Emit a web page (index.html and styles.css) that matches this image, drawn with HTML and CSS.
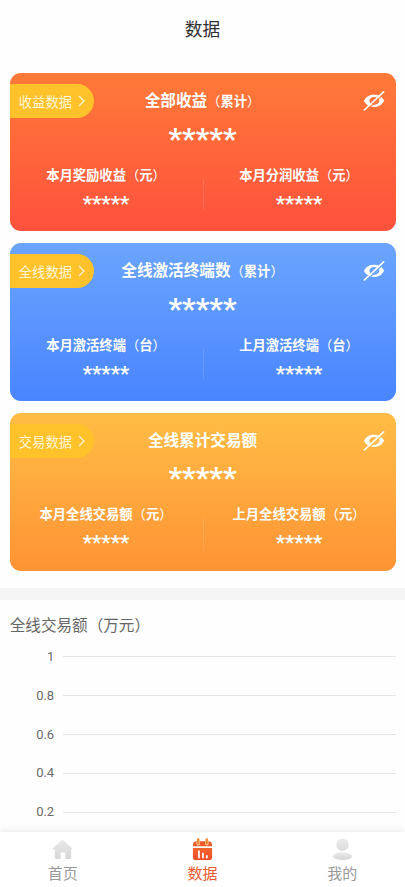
FILE: index.html
```html
<!DOCTYPE html>
<html lang="zh-CN">
<head>
<meta charset="utf-8">
<title>数据</title>
<link rel="stylesheet" href="styles.css">
</head>
<body>
<svg class="defs" width="0" height="0" aria-hidden="true">
  <symbol id="eye-off" viewBox="0 0 22 20">
    <path fill="currentColor" fill-rule="evenodd" d="M1 9.800C3 5.600 6.500 3.700 11 3.700c4.600 0 8.200 2 10.200 5.700-2 4.400-5.600 6.500-10.200 6.500-4.500 0-8.200-2-10-6.100zM6.400 10c.2 2.300 2 3.700 4.800 3.700 2.900 0 5-1.500 5.200-3.900-.2-2.400-2.100-3.800-5-3.800-2.900 0-4.800 1.500-5 4z"/>
    <path d="M13.500 7.300q1.300.8 1 2.600-.5 1.700-2.500 2.200-1.600.3-3.200-.3z" fill="currentColor" opacity=".35"/>
    <path class="slash-gap" d="M2.600 20 22 2" fill="none" stroke-width="1.200"/>
    <path d="M1.300 19 20.600.9" fill="none" stroke="currentColor" stroke-width="1.600" stroke-linecap="round"/>
  </symbol>
</svg>
<header class="header">数据</header>
<main class="content">
  <section class="cards">
    <article class="card card-red">
      <a class="tag">收益数据<svg viewBox="0 0 7 12"><path d="M1 1l5 5-5 5"/></svg></a>
      <svg class="eye"><use href="#eye-off"/></svg>
      <h2>全部收益<small><em>（</em>累计<em>）</em></small></h2>
      <p class="total">*****</p>
      <div class="columns">
        <div class="column"><span>本月奖励收益<em>（</em>元<em>）</em></span><b>*****</b></div>
        <div class="column"><span>本月分润收益<em>（</em>元<em>）</em></span><b>*****</b></div>
      </div>
    </article>
    <article class="card card-blue">
      <a class="tag">全线数据<svg viewBox="0 0 7 12"><path d="M1 1l5 5-5 5"/></svg></a>
      <svg class="eye"><use href="#eye-off"/></svg>
      <h2>全线激活终端数<small><em>（</em>累计<em>）</em></small></h2>
      <p class="total">*****</p>
      <div class="columns">
        <div class="column"><span>本月激活终端<em>（</em>台<em>）</em></span><b>*****</b></div>
        <div class="column"><span>上月激活终端<em>（</em>台<em>）</em></span><b>*****</b></div>
      </div>
    </article>
    <article class="card card-orange">
      <a class="tag">交易数据<svg viewBox="0 0 7 12"><path d="M1 1l5 5-5 5"/></svg></a>
      <svg class="eye"><use href="#eye-off"/></svg>
      <h2>全线累计交易额</h2>
      <p class="total">*****</p>
      <div class="columns">
        <div class="column"><span>本月全线交易额<em>（</em>元<em>）</em></span><b>*****</b></div>
        <div class="column"><span>上月全线交易额<em>（</em>元<em>）</em></span><b>*****</b></div>
      </div>
    </article>
  </section>
  <section class="chart">
    <h3>全线交易额（万元）</h3>
    <div class="tick"><span>1</span><i></i></div>
    <div class="tick"><span>0.8</span><i></i></div>
    <div class="tick"><span>0.6</span><i></i></div>
    <div class="tick"><span>0.4</span><i></i></div>
    <div class="tick"><span>0.2</span><i></i></div>
  </section>
</main>
<nav class="tabs">
  <a class="tab">
    <svg viewBox="0 0 24 24"><defs><linearGradient id="gray" x2="0" y2="1"><stop stop-color="#e9e9e9"/><stop offset="1" stop-color="#d6d6d6"/></linearGradient></defs><path fill="url(#gray)" d="M11 2.500q1-.9 2 0l9 8q1.200 1.500-.5 1.500H21v8.500q0 1.500-1.500 1.500H15v-6q0-1-1-1h-3q-1 0-1 1v6H5.500Q4 22 4 20.500V12H2.500q-1.700 0-.5-1.500z"/></svg>
    <span>首页</span>
  </a>
  <a class="tab active">
    <svg viewBox="0 0 24 24"><defs><linearGradient id="hot" x2="0" y2="1"><stop stop-color="#f0642e"/><stop offset="1" stop-color="#f0502b"/></linearGradient></defs><path fill="#ee5a2c" d="M2 8.500V8q0-4.500 4-4.500h12q4 0 4 4.500v.5z"/><path fill="url(#hot)" d="M2 10.500h20V20q0 3-3 3H5q-3 0-3-3z"/><path d="M7.500 2v4M16.500 2v4" stroke="#fbd9b0" stroke-width="3.600" stroke-linecap="round"/><path d="M7.500 1.500v4.300M16.500 1.500v4.300" stroke="#f08a35" stroke-width="2.400" stroke-linecap="round"/><path d="M8.300 13v8M12.500 15.500V21M16.500 18v3" stroke="#fff" stroke-width="1.800"/></svg>
    <span>数据</span>
  </a>
  <a class="tab">
    <svg viewBox="0 0 24 24"><defs><linearGradient id="head" x2="0" y2="1"><stop stop-color="#ececec"/><stop offset="1" stop-color="#dadada"/></linearGradient></defs><circle cx="12" cy="7" r="6.500" fill="url(#head)"/><ellipse cx="12" cy="19" rx="10" ry="4" fill="url(#gray)"/></svg>
    <span>我的</span>
  </a>
</nav>
</body>
</html>
```
FILE: styles.css
```css
* {
  box-sizing: border-box;
}

body {
  margin: 0;
  height: 887px;
  overflow: hidden;
  display: flex;
  flex-direction: column;
  background: #fefefe;
  font-family: "Noto Sans CJK SC", sans-serif;
}

.defs {
  display: none;
}

.header {
  flex: none;
  height: 72px;
  padding-top: 15px;
  text-align: center;
  font-size: 17.700px;
  line-height: 26px;
  color: #303030;
}

.content {
  flex: 1;
  min-height: 0;
  overflow: hidden;
}

.cards {
  display: flex;
  flex-direction: column;
  gap: 11.500px;
  padding: 0.500px 9.500px 16.500px 9.500px;
}

.card {
  position: relative;
  height: 158.500px;
  padding-top: 15px;
  border-radius: 11px;
  background: linear-gradient(var(--top), var(--bottom));
  color: #fff;
  text-align: center;
}

.card-red {
  --top: #ff7a38;
  --bottom: #ff513d;
}

.card-blue {
  --top: #6ba5ff;
  --bottom: #4985ff;
}

.card-orange {
  --top: #ffbd45;
  --bottom: #ff9335;
}

.tag {
  position: absolute;
  left: 0;
  top: 11.500px;
  width: 84px;
  height: 34px;
  padding-left: 9.300px;
  display: flex;
  align-items: center;
  gap: 6px;
  border-radius: 0 17px 17px 0;
  background: #ffc22a;
  color: #fff5d8;
  font-size: 13.300px;
}

.tag svg {
  width: 7px;
  height: 12px;
  fill: none;
  stroke: #fff5d8;
  stroke-width: 1.200;
}

.eye {
  position: absolute;
  right: 10.500px;
  top: 18px;
  width: 22px;
  height: 20px;
}

.slash-gap {
  stroke: var(--top);
}

.card h2 {
  margin: 0;
  font-size: 15.600px;
  line-height: 23px;
  font-weight: 700;
}

.card small {
  font-size: 13.300px;
}

.card em {
  font-style: normal;
  font-weight: 400;
}

.total {
  margin: 0;
  height: 45px;
  padding-top: 8px;
  font: 700 30px/38px Roboto, sans-serif;
}

.columns {
  display: flex;
}

.column {
  flex: 1;
  display: flex;
  flex-direction: column;
  font-size: 13.300px;
  line-height: 20px;
  font-weight: 700;
  padding-top: 8px;
}

.column b {
  margin-top: 6px;
  font: 700 20.500px/26px Roboto, sans-serif;
}

.column + .column {
  background: linear-gradient(rgba(255, 255, 255, 0.120), rgba(255, 255, 255, 0.120)) 0 22px / 1px 31px no-repeat;
}

.chart {
  border-top: 12px solid #f5f5f5;
  padding: 12px 9.500px 0 9.700px;
}

.chart h3 {
  margin: 0 0 2px;
  font-size: 15.600px;
  line-height: 24px;
  font-weight: 400;
  color: #666;
}

.tick {
  display: flex;
  align-items: center;
  height: 38.850px;
}

.tick span {
  width: 44.500px;
  margin-right: 8.800px;
  text-align: right;
  font: 13px/16px Roboto, sans-serif;
  color: #6b6b6b;
}

.tick i {
  flex: 1;
  height: 1px;
  background: #e5e5e5;
}

.tabs {
  position: relative;
  flex: none;
  display: flex;
  justify-content: center;
  height: 55px;
  background: #fff;
  box-shadow: 0 -2px 6px rgba(0, 0, 0, 0.070);
}

.tab {
  flex: none;
  width: 139.800px;
  display: flex;
  flex-direction: column;
  align-items: center;
  padding-top: 6px;
  font-size: 15px;
  line-height: 23px;
  color: #999;
}

.tab svg {
  width: 23px;
  height: 23px;
}

.active {
  color: #e85a30;
}
```
